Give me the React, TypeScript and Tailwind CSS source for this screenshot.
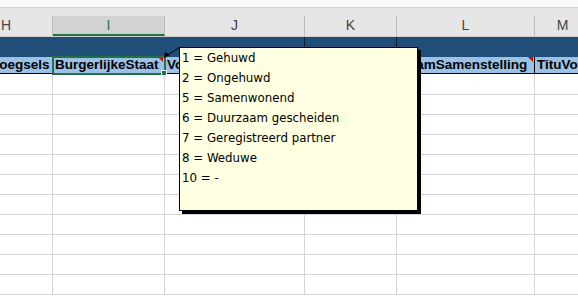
import React from 'react';

// Column layout of the visible sheet part (H starts off-screen on the left)
interface Col {
  letter: string;
  width: number;
  band: string; // separator colour inside the dark blue band
  title: string;
}

const cols: Col[] = [
  { letter: 'H', width: 93, band: 'border-r-[#1f4e78]', title: 'Voorvoegsels' },
  { letter: 'I', width: 112, band: 'border-r-[#1f4e78]', title: 'BurgerlijkeStaat' },
  { letter: 'J', width: 140, band: 'border-r-[#0b1d30]', title: 'Voornamen' },
  { letter: 'K', width: 92, band: 'border-r-[#0b1d30]', title: 'Gezinsvorm' },
  { letter: 'L', width: 138, band: 'border-r-[#1f4e78]', title: 'NaamSamenstelling' },
  { letter: 'M', width: 56, band: 'border-r-[#1f4e78]', title: 'TituVoorletters' },
];

const commentLines = [
  '1 = Gehuwd',
  '2 = Ongehuwd',
  '5 = Samenwonend',
  '6 = Duurzaam gescheiden',
  '7 = Geregistreerd partner',
  '8 = Weduwe',
  '10 = -',
];

const emptyRows = Array.from({ length: 11 }, (_, i) => i);

const App: React.FC = () => {
  return (
    <div className="relative w-[578px] h-[303px] overflow-hidden bg-white font-['Liberation_Sans',sans-serif]">
      <div className="ml-[-40px] flex flex-col w-max">
        {/* formula bar bottom */}
        <div className="h-[8px] bg-[#f9f9f9] border-b border-[#d4d4d4]" />
        <div className="h-[8px] bg-[#e6e6e6]" />

        {/* column headers */}
        <div className="flex h-[21px] bg-[#e6e6e6] border-b border-[#cfcfcf]">
          {cols.map((c) => (
            <div
              key={c.letter}
              style={{ width: c.width }}
              className={
                c.letter === 'I'
                  ? 'flex items-end justify-center pb-[1px] bg-[#d2d2d2] border-b-2 border-[#217346] border-r border-r-[#bcbcbc] text-[14px] leading-[16px] text-[#217346]'
                  : 'flex items-end justify-center pb-[3px] border-r border-[#bcbcbc] text-[14px] leading-[16px] text-[#444444]'
              }
            >
              {c.letter}
            </div>
          ))}
        </div>

        {/* dark blue band */}
        <div className="flex h-[20px] bg-[#1f4e78]">
          {cols.map((c) => (
            <div key={c.letter} style={{ width: c.width }} className={`border-r ${c.band}`} />
          ))}
        </div>

        {/* header titles row */}
        <div className="flex h-[17px] bg-[#9bc2e6] border-b border-black">
          {cols.map((c) => (
            <div
              key={c.letter}
              style={{ width: c.width }}
              className="relative flex items-end overflow-hidden whitespace-nowrap border-r border-black pl-[2px] text-[13.5px] leading-[16px] font-bold text-black"
            >
              {c.title}
              {(c.letter === 'I' || c.letter === 'L') && (
                <span className="absolute top-0 right-[1px] w-0 h-0 border-l-[5px] border-l-transparent border-t-[5px] border-t-[#e00000]" />
              )}
            </div>
          ))}
        </div>

        {/* empty rows */}
        {emptyRows.map((r) => (
          <div key={r} className={`flex border-b border-[#d4d4d4] ${r === 0 ? 'h-[21px]' : 'h-[20px]'}`}>
            {cols.map((c) => (
              <div key={c.letter} style={{ width: c.width }} className="border-r border-[#d4d4d4]" />
            ))}
          </div>
        ))}
      </div>

      {/* active cell selection */}
      <div className="absolute left-[52px] top-[56px] w-[114px] h-[19px] border-2 border-[#217346]" />
      <div className="absolute left-[161px] top-[70px] w-[6px] h-[6px] bg-[#217346] border border-white" />

      {/* comment connector */}
      <svg className="absolute left-0 top-0" width="578" height="303">
        <line x1="166" y1="56" x2="180" y2="47" stroke="#000" strokeWidth="1" />
        <polygon points="164,58 165,52 170,55" fill="#000" />
      </svg>

      {/* comment box */}
      <div className="absolute left-[179px] top-[47px] w-[239px] h-[164px] border border-black bg-[#ffffe1] shadow-[3px_3px_0_#000] pl-[2px] font-['DejaVu_Sans',sans-serif] text-[11.8px] text-black">
        {commentLines.map((l) => (
          <div key={l} className="h-[20px] leading-[20px] whitespace-nowrap">
            {l}
          </div>
        ))}
      </div>
    </div>
  );
};

export default App;
